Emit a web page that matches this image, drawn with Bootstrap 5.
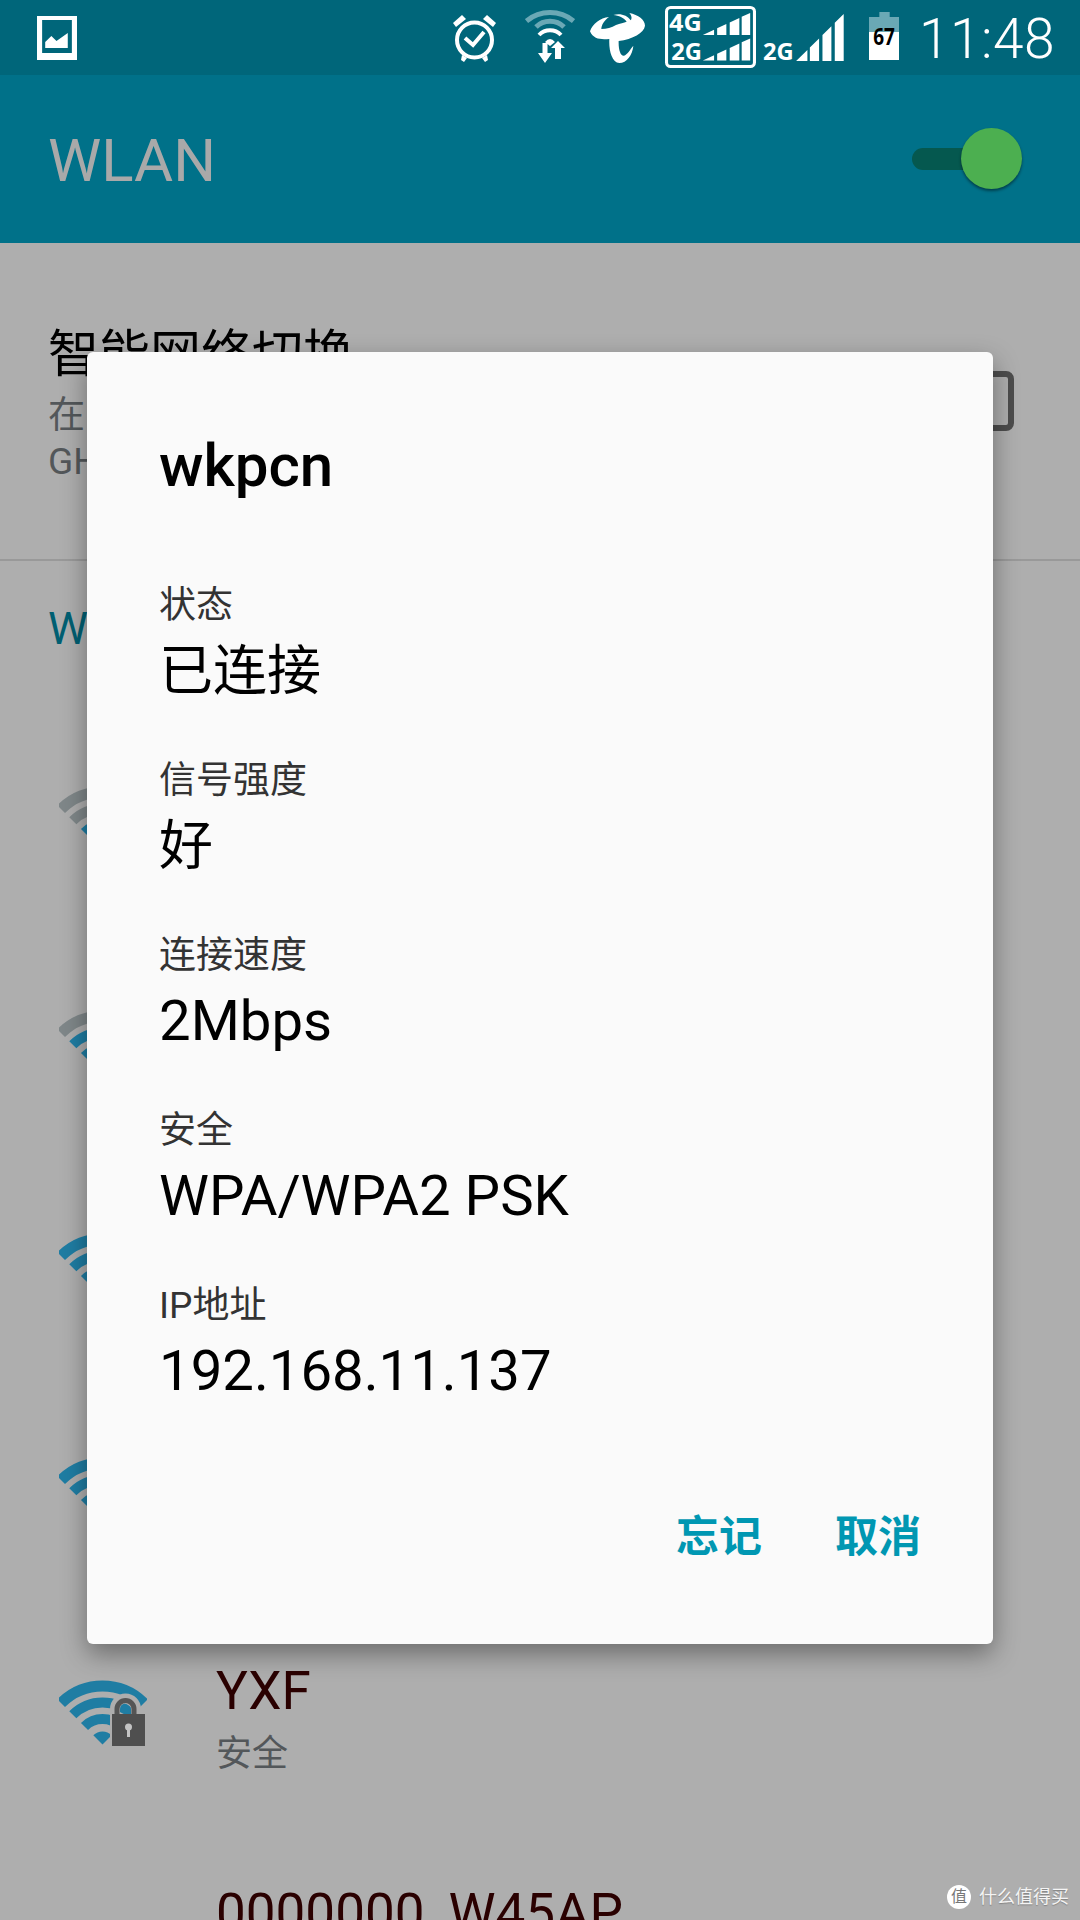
<!DOCTYPE html>
<html lang="zh">
<head>
  <meta charset="UTF-8">
  <title>WLAN</title>
  <link href="https://cdn.jsdelivr.net/npm/bootstrap@5.3.3/dist/css/bootstrap.min.css" rel="stylesheet">
  <style>
    body {
      width: 1080px;
      height: 1920px;
      overflow: hidden;
      position: relative;
      background: #aeaeae;
      font-family: Roboto, "Noto Sans CJK SC", sans-serif;
    }
    svg { display: block; flex: none; }
    .status-strip { height: 75px; background: #00667a; padding-left: 37px; }
    .ico-pic { margin-top: 16px; }
    .ico-alarm { margin: 14px 0 0 376px; }
    .ico-wifi { margin: 10px 0 0 28px; }
    .ico-telecom { margin: 12px 0 0 15px; }
    .ico-dual { margin: 6px 0 0 20px; }
    .ico-sig { margin: 14px 0 0 7px; }
    .ico-batt { margin: 12px 0 0 25px; }
    .status-time { margin-left: 20px; font-size: 55px; line-height: 79px; color: #fff; font-weight: 300; letter-spacing: .5px; }
    .sb-tag { font-family: "Noto Sans", sans-serif; font-weight: 700; font-size: 23px; fill: #fff; }
    .app-strip { height: 168px; background: #007189; padding: 0 58px 0 48px; }
    .app-title { font-size: 60px; color: #a9a9a9; line-height: 1; padding-top: 3px; }
    .switch-box { width: 110px; height: 62px; }
    .switch-track { left: 0; top: 20px; width: 80px; height: 22px; border-radius: 11px; background: #05584f; }
    .switch-thumb { right: 0; top: 0; width: 61px; height: 61px; border-radius: 50%; background: #4caf50; box-shadow: 0 2px 3px rgba(0,0,0,.45); }
    .smart-row { height: 318px; padding: 80px 66px 0 48px; border-bottom: 2px solid #999; }
    .smart-title { font-size: 51px; line-height: 64px; color: #000; }
    .smart-sub { font-size: 37px; line-height: 46px; color: #53575a; margin-top: 6px; }
    .smart-check { width: 60px; height: 60px; border: 6px solid #4d4d4d; border-radius: 8px; margin-top: 48px; }
    .group-head { font-size: 45px; color: #005f72; padding: 43px 0 0 48px; line-height: 50px; }
    .net-list { margin-top: 109px; }
    .net-row { height: 223.5px; padding-left: 59px; }
    .net-icon { width: 88px; height: 66px; margin: 23px 69px 0 0; }
    .net-text { padding-top: 2px; }
    .net-name { font-size: 53px; line-height: 64px; color: #2a0000; }
    .net-sub { font-size: 36px; line-height: 48px; color: #53575a; margin-top: 7px; }
    .net-last { padding-left: 216px; }
    .arc-on { fill: none; stroke: #1f7da3; }
    .arc-off { fill: none; stroke: #7f8789; }
    .dlg {
      left: 87px; top: 352px; width: 906px; height: 1292px;
      background: #fafafa; border-radius: 6px;
      box-shadow: 0 10px 26px rgba(0,0,0,.38);
      padding: 0 72px;
    }
    .dlg-title { font-size: 60px; font-weight: 500; color: #000; line-height: 66px; padding-top: 81px; height: 148px; margin-bottom: 82px; }
    .info-item { height: 175px; }
    .info-label { font-size: 37px; line-height: 48px; color: #333; }
    .info-value { font-size: 56.3px; line-height: 76px; color: #000; margin-top: 3px; }
    .info-cjk { font-size: 54px; margin-top: 4px; }
    .dlg-actions { margin-top: 55px; gap: 73px; }
    .dlg-btn { font-size: 43px; font-weight: 700; color: #0097b2; line-height: 50px; }
    .mark-logo { right: 11px; bottom: 11px; gap: 8px; font-size: 18px; color: #f4f4f4; line-height: 24px; text-shadow: 0 1px 1px rgba(0,0,0,.25); }
    .mark-dot { width: 24px; height: 24px; border-radius: 50%; background: #fff; color: #777; font-size: 16px; line-height: 24px; text-align: center; text-shadow: none; }
  </style>
</head>
<body>

  <div class="status-strip d-flex align-items-start">
    <!-- picture notification -->
    <svg class="ico-pic" width="40" height="44" viewBox="0 0 39 44" preserveAspectRatio="none"><path fill="#fff" fill-rule="evenodd" d="M0 0h39v44H0zM5 4v33h29V4z"/><path fill="#fff" d="M8 32v-6l6-6 5 5 11-8v15z"/></svg>
    <!-- alarm -->
    <svg class="ico-alarm" width="44" height="48" viewBox="0 0 44 48"><circle cx="21.500" cy="26" r="17.500" fill="none" stroke="#fff" stroke-width="4"/><path d="M12 24l8 7 11-13" fill="none" stroke="#fff" stroke-width="4"/><path fill="#fff" d="M0 9l9-8 4 4-10 8zM43 9l-9-8-4 4 10 8zM9 41l5 3-3 4-3-2zM34 41l-5 3 3 4 3-2z"/></svg>
    <!-- wifi with arrows -->
    <svg class="ico-wifi" width="50" height="54" viewBox="0 0 50 54"><path d="M1.500 11A37 37 0 0 1 48.500 11" fill="none" stroke="#6aa8b5" stroke-width="5"/><path d="M11 17A20 20 0 0 1 39 17" fill="none" stroke="#6aa8b5" stroke-width="5"/><path d="M14 25A15 15 0 0 1 36 25" fill="none" stroke="#fff" stroke-width="4"/><path fill="#fff" d="M20 32Q25 26 30 32L25 36zM17.500 33h5v10h4.500l-7 10-7-10h4.500zM33 31l7 7h-4v11h-6V38h-4z"/></svg>
    <!-- telecom logo -->
    <svg class="ico-telecom" width="55" height="51" viewBox="240 37 165 153"><path fill="#fff" d="M240 95C248 72 270 55 297 52 283 62 274 76 274 88 290 88 305 84 318 76 330 70 342 70 350 66 342 54 326 48 310 46 330 40 352 46 362 62 366 58 366 48 358 40 385 46 405 60 405 78 402 100 368 118 326 124 325 150 332 170 342 168 352 165 360 150 370 138 368 165 350 190 328 190 305 188 296 150 298 118 275 120 250 120 240 95Z"/></svg>
    <!-- dual sim box -->
    <svg class="ico-dual" width="91" height="62" viewBox="0 0 89 62" preserveAspectRatio="none">
      <rect x="1.500" y="1.500" width="86" height="59" rx="4" fill="none" stroke="#fff" stroke-width="3"/>
      <text class="sb-tag" x="4" y="25" textLength="32" lengthAdjust="spacingAndGlyphs">4G</text>
      <text class="sb-tag" x="6" y="54" textLength="30" lengthAdjust="spacingAndGlyphs">2G</text>
      <path fill="#fff" d="M37 29L48 23.800V29zM51 22.300L60 18V29H51zM63.300 16.500L72.700 12V29H63.300zM75 10.800L83.300 7V29H75z"/>
      <path fill="#fff" transform="translate(0 25.500)" d="M37 29L48 23.800V29zM51 22.300L60 18V29H51zM63.300 16.500L72.700 12V29H63.300zM75 10.800L83.300 7V29H75z"/>
    </svg>
    <!-- 2G signal -->
    <svg class="ico-sig" width="81" height="47" viewBox="0 0 79 47" preserveAspectRatio="none">
      <text class="sb-tag" x="0" y="46" textLength="30" lengthAdjust="spacingAndGlyphs">2G</text>
      <path fill="#fff" d="M32.300 47L43.300 36V47zM45.700 33.600L54.700 24.400V47H45.700zM58 21L66.700 12.200V47H58zM70 8.800L78.700 0V47H70z"/>
    </svg>
    <!-- battery -->
    <svg class="ico-batt" width="30" height="48" viewBox="0 0 29 48" preserveAspectRatio="none">
      <path fill="#6aa8b5" d="M10 0h10v5h9v15H0V5h10z"/>
      <path fill="#fff" d="M0 20h29v28H0z"/>
      <text x="4" y="33" font-family="Noto Sans, sans-serif" font-weight="700" font-size="23" fill="#000" textLength="21" lengthAdjust="spacingAndGlyphs">67</text>
    </svg>
    <div class="status-time">11:48</div>
  </div>

  <div class="app-strip d-flex align-items-center justify-content-between">
    <div class="app-title">WLAN</div>
    <div class="switch-box position-relative">
      <div class="switch-track position-absolute"></div>
      <div class="switch-thumb position-absolute"></div>
    </div>
  </div>

  <div class="smart-row d-flex justify-content-between">
    <div>
      <div class="smart-title">智能网络切换</div>
      <div class="smart-sub">在<br>GHz</div>
    </div>
    <div class="smart-check"></div>
  </div>

  <div class="group-head">WLAN</div>

  <div class="net-list">
    <div class="net-row d-flex"><svg class="net-icon" viewBox="0 0 88 66"><path class="arc-off" stroke-width="11" d="M2.100 23.100A58.500 58.500 0 0 1 84.900 23.100"/><path class="arc-off" stroke-width="10" d="M13.800 34.800A42 42 0 0 1 73.200 34.800"/><path class="arc-on" stroke-width="10" d="M25.500 46.500A25.500 25.500 0 0 1 61.500 46.500"/></svg></div>
    <div class="net-row d-flex"><svg class="net-icon" viewBox="0 0 88 66"><path class="arc-off" stroke-width="11" d="M2.100 23.100A58.500 58.500 0 0 1 84.900 23.100"/><path class="arc-on" stroke-width="10" d="M13.800 34.800A42 42 0 0 1 73.200 34.800"/><path class="arc-on" stroke-width="10" d="M25.500 46.500A25.500 25.500 0 0 1 61.500 46.500"/></svg></div>
    <div class="net-row d-flex"><svg class="net-icon" viewBox="0 0 88 66"><path class="arc-on" stroke-width="11" d="M2.100 23.100A58.500 58.500 0 0 1 84.900 23.100"/><path class="arc-on" stroke-width="10" d="M13.800 34.800A42 42 0 0 1 73.200 34.800"/><path class="arc-on" stroke-width="10" d="M25.500 46.500A25.500 25.500 0 0 1 61.500 46.500"/></svg></div>
    <div class="net-row d-flex"><svg class="net-icon" viewBox="0 0 88 66"><path class="arc-on" stroke-width="11" d="M2.100 23.100A58.500 58.500 0 0 1 84.900 23.100"/><path class="arc-on" stroke-width="10" d="M13.800 34.800A42 42 0 0 1 73.200 34.800"/><path class="arc-on" stroke-width="10" d="M25.500 46.500A25.500 25.500 0 0 1 61.500 46.500"/></svg></div>
    <div class="net-row d-flex">
      <svg class="net-icon" viewBox="0 0 88 66">
        <path class="arc-on" stroke-width="11" d="M2.100 23.100A58.500 58.500 0 0 1 84.900 23.100"/>
        <path class="arc-on" stroke-width="10" d="M13.800 34.800A42 42 0 0 1 73.200 34.800"/>
        <path class="arc-on" stroke-width="10" d="M25.500 46.500A25.500 25.500 0 0 1 61.500 46.500"/>
        <path fill="#1f7da3" d="M34.300 55.300A13 13 0 0 1 52.700 55.300L43.500 64.500z"/>
        <path d="M56 38v-9a10.500 10.500 0 0 1 21 0v9" fill="none" stroke="#aeaeae" stroke-width="10"/>
        <path fill="#aeaeae" d="M51 36h38v31H51z"/>
        <path d="M58 38v-9a8.500 8.500 0 0 1 17 0v9" fill="none" stroke="#555" stroke-width="5"/>
        <path fill="#4f4f4f" d="M53 34h33v33H53z"/>
        <circle cx="69.500" cy="47" r="3.500" fill="#c4c4c4"/>
        <path fill="#c4c4c4" d="M68 48h3v9h-3z"/>
      </svg>
      <div class="net-text">
        <div class="net-name">YXF</div>
        <div class="net-sub">安全</div>
      </div>
    </div>
    <div class="net-name net-last">0000000_W45AP</div>
  </div>

  <div class="dlg position-absolute">
    <div class="dlg-title">wkpcn</div>
    <div class="info-item"><div class="info-label">状态</div><div class="info-value info-cjk">已连接</div></div>
    <div class="info-item"><div class="info-label">信号强度</div><div class="info-value info-cjk">好</div></div>
    <div class="info-item"><div class="info-label">连接速度</div><div class="info-value">2Mbps</div></div>
    <div class="info-item"><div class="info-label">安全</div><div class="info-value">WPA/WPA2 PSK</div></div>
    <div class="info-item"><div class="info-label">IP地址</div><div class="info-value">192.168.11.137</div></div>
    <div class="dlg-actions d-flex justify-content-end">
      <div class="dlg-btn">忘记</div>
      <div class="dlg-btn">取消</div>
    </div>
  </div>

  <div class="mark-logo position-absolute d-flex align-items-center">
    <div class="mark-dot">值</div>
    <div>什么值得买</div>
  </div>

</body>
</html>
